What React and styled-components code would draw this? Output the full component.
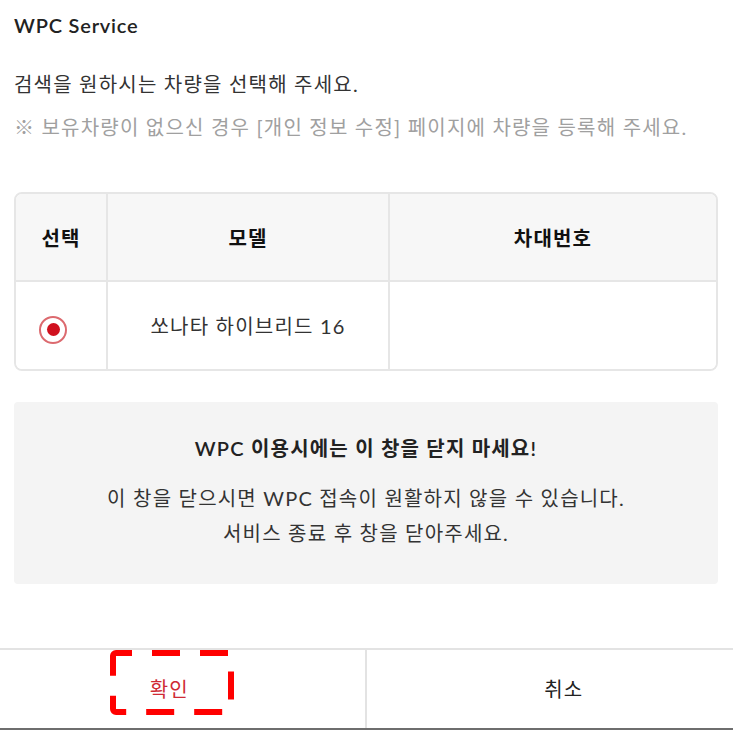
import React from "react";
import styled, { createGlobalStyle } from "styled-components";

const GlobalStyle = createGlobalStyle`
  html, body {
    margin: 0;
    padding: 0;
    background: #fff;
  }
  body {
    font-family: Lato, "Noto Sans CJK KR", sans-serif;
    color: #222;
  }
`;

const Page = styled.div`
  width: 733px;
  height: 730px;
  display: flex;
  flex-direction: column;
  overflow: hidden;
`;

const Body = styled.div`
  padding: 0 15px 0 14px;
`;

const Title = styled.h1`
  margin: 11px 0 0;
  font-size: 20px;
  line-height: 28px;
  font-weight: 600;
  letter-spacing: 0.8px;
`;

const Desc = styled.p`
  margin: ${(p) => p.$top}px 0 0;
  font-size: 20px;
  line-height: 28px;
  color: ${(p) => (p.$muted ? "#a0a0a0" : "#333")};
  letter-spacing: 1.2px;
  white-space: nowrap;
`;

const Table = styled.div`
  margin-top: 51px;
  border: 2px solid #e6e6e6;
  border-radius: 8px;
  overflow: hidden;
  display: grid;
  grid-template-columns: 92px 282px 1fr;
`;

const Cell = styled.div`
  height: ${(p) => (p.$head ? 86 : 87)}px;
  box-sizing: border-box;
  display: flex;
  align-items: center;
  justify-content: ${(p) => (p.$start ? "flex-start" : "center")};
  padding: ${(p) => (p.$start ? "8px 0 0 23px" : "0")};
  background: ${(p) => (p.$head ? "#f7f7f7" : "#fff")};
  border-right: ${(p) => (p.$last ? "none" : "2px solid #e6e6e6")};
  font-size: 20px;
  font-weight: ${(p) => (p.$head ? 700 : 400)};
  color: ${(p) => (p.$head ? "#111" : "#333")};
  letter-spacing: 1.2px;
`;

const HeadRule = styled.div`
  grid-column: 1 / -1;
  height: 2px;
  background: #e6e6e6;
`;

const Radio = styled.span`
  width: 28px;
  height: 28px;
  box-sizing: border-box;
  border: 2px solid #dc6a6f;
  border-radius: 50%;
  display: flex;
  align-items: center;
  justify-content: center;
  &::after {
    content: "";
    width: 13px;
    height: 13px;
    border-radius: 50%;
    background: #d0111f;
  }
`;

const Notice = styled.div`
  margin-top: 31px;
  height: 182px;
  box-sizing: border-box;
  padding-top: 32px;
  background: #f4f4f4;
  border-radius: 4px;
  text-align: center;
  font-size: 20px;
  color: #333;
  letter-spacing: 1.2px;
`;

const NoticeHead = styled.div`
  line-height: 28px;
  font-weight: 600;
  color: #222;
  margin-bottom: 19px;
`;

const NoticeLine = styled.div`
  line-height: 35px;
`;

const Footer = styled.div`
  margin-top: auto;
  height: 82px;
  box-sizing: border-box;
  display: flex;
  border-top: 2px solid #e3e3e3;
  border-bottom: 2px solid #6e6e6e;
`;

const Action = styled.div`
  flex: 1;
  display: flex;
  align-items: center;
  justify-content: center;
  padding: ${(p) => (p.$primary ? "0 26px 2px 0" : "0 0 2px 28px")};
  border-left: ${(p) => (p.$primary ? "none" : "2px solid #e3e3e3")};
  font-size: 20px;
  letter-spacing: 1.2px;
  color: ${(p) => (p.$primary ? "#cf2a34" : "#222")};
  cursor: pointer;
`;

const Marked = styled.span`
  position: relative;
`;

const Mark = styled.svg`
  position: absolute;
  left: -40px;
  top: -24px;
  width: 124px;
  height: 65px;
  overflow: visible;
  pointer-events: none;
`;

export default function App() {
  return (
    <Page>
      <GlobalStyle />
      <Body>
        <Title>WPC Service</Title>
        <Desc $top={31}>검색을 원하시는 차량을 선택해 주세요.</Desc>
        <Desc $top={15} $muted>
          ※ 보유차량이 없으신 경우 [개인 정보 수정] 페이지에 차량을 등록해 주세요.
        </Desc>
        <Table>
          <Cell $head>선택</Cell>
          <Cell $head>모델</Cell>
          <Cell $head $last>차대번호</Cell>
          <HeadRule />
          <Cell $start>
            <Radio />
          </Cell>
          <Cell>쏘나타 하이브리드 16</Cell>
          <Cell $last />
        </Table>
        <Notice>
          <NoticeHead>WPC 이용시에는 이 창을 닫지 마세요!</NoticeHead>
          <NoticeLine>이 창을 닫으시면 WPC 접속이 원활하지 않을 수 있습니다.</NoticeLine>
          <NoticeLine>서비스 종료 후 창을 닫아주세요.</NoticeLine>
        </Notice>
      </Body>
      <Footer>
        <Action $primary>
          <Marked>
            확인
            <Mark viewBox="0 0 124 65">
              <rect
                x="3"
                y="3"
                width="118"
                height="59"
                rx="3"
                fill="none"
                stroke="#ff0000"
                strokeWidth="6"
                strokeDasharray="28 20"
                strokeDashoffset="12"
              />
            </Mark>
          </Marked>
        </Action>
        <Action>취소</Action>
      </Footer>
    </Page>
  );
}
